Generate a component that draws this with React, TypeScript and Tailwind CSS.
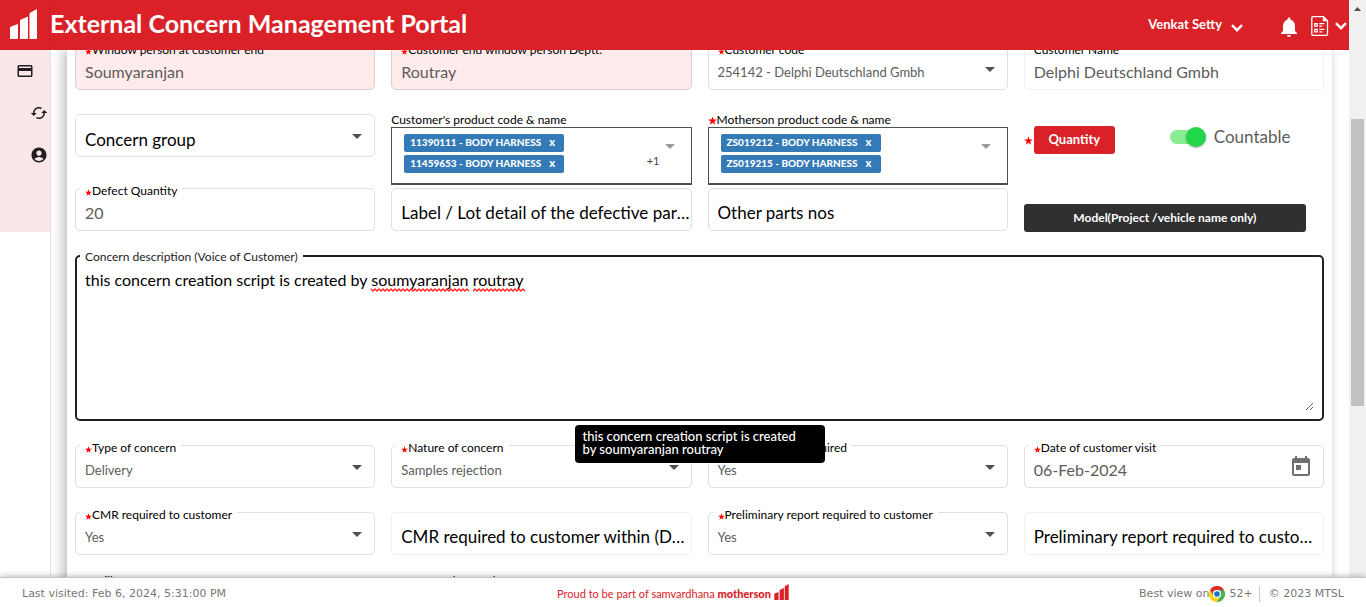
import React, { useId, useState } from "react";
import {
  MdAccountCircle,
  MdCached,
  MdNotifications,
  MdPayment,
  MdToday,
} from "react-icons/md";

function Star({ small = true }: { small?: boolean }) {
  return (
    <svg
      viewBox="0 0 24 24"
      aria-hidden="true"
      className={small ? "mt-[2px] inline-block size-[7px] shrink-0" : "inline-block size-[9px] shrink-0"}
    >
      <path
        fill="#ff0000"
        d="M12 1l3 8.200 8.700.2-7 5.300 2.500 8.300L12 18l-7.200 5 2.500-8.300-7-5.300 8.700-.2z"
      />
    </svg>
  );
}

function BarsLogo({ className }: { className: string }) {
  return (
    <svg viewBox="0 0 27 30" aria-hidden="true" className={className}>
      <path
        fill="currentColor"
        d="M0 19q0-1 1-1.400L8 15v14q0 1-1 1H0zM10 12q0-1 1-1.400L18 7.500V29q0 1-1 1h-7zM19.500 5q0-1 1-1.400L27 0v29q0 1-1 1h-6.500z"
      />
    </svg>
  );
}

function Triangle({ className }: { className: string }) {
  return (
    <svg viewBox="0 0 10 5" aria-hidden="true" className={className}>
      <path d="M0 0h10L5 5z" fill="currentColor" />
    </svg>
  );
}

function Chevron() {
  return (
    <svg viewBox="0 0 12 8" aria-hidden="true" className="h-2 w-3">
      <path d="M1 1.200l5 5 5-5" fill="none" stroke="currentColor" strokeWidth="2.400" />
    </svg>
  );
}

function ReportIcon() {
  return (
    <svg viewBox="0 0 18 20" aria-hidden="true" className="h-5 w-[18px]" fill="none" stroke="currentColor">
      <path d="M2 .7h10.500l4 4V18q0 1.300-1.300 1.300H2Q.8 19.300.8 18V2Q.8.7 2 .7z" strokeWidth="1.300" />
      <path d="M12.300.8v4h4.200z" fill="currentColor" />
      <path d="M3.700 7.600h2.500v2.500H3.700zM3.700 13.300h2.500v2.500H3.700zM8.300 7.700h5M8.300 10.200h3M8.300 13.300h5M8.300 15.800h3" strokeWidth="1.200" />
    </svg>
  );
}

function ChromeIcon() {
  return (
    <svg viewBox="0 0 48 48" aria-hidden="true" className="size-4">
      <path fill="#fcd209" d="M24 24L3.200 12A24 24 0 0 0 24 48l10.400-18z" />
      <path fill="#4caf50" d="M24 48a24 24 0 0 0 20.800-36L24 12l10.400 18z" />
      <path fill="#db2f2b" d="M3.200 12A24 24 0 0 1 44.800 12H24a12 12 0 0 0-11.400 8.300l-1 5z" />
      <circle cx="24" cy="24" r="12" fill="#fff" />
      <circle cx="24" cy="24" r="8.500" fill="#1b73d1" />
    </svg>
  );
}

function NotchLabel({ id, text, required, clear }: { id: string; text: string; required?: boolean; clear?: boolean }) {
  return (
    <label
      htmlFor={id}
      className={
        "absolute -top-[6px] left-1 flex items-center whitespace-nowrap px-[5px] text-xs leading-4 text-black " +
        (clear ? "" : "bg-white")
      }
    >
      {required && <Star />}
      {text}
    </label>
  );
}

type FieldProps = {
  label?: string;
  required?: boolean;
  value?: string;
  placeholder?: string;
  tone?: "normal" | "pink" | "faint";
  icon?: React.ReactNode;
};

const tones = {
  normal: "border-[#dfdfdf]",
  pink: "border-[#e0cdcd] bg-[#ffebeb]",
  faint: "border-[#f0f0f0]",
};

function TextField({ label, required, value, placeholder, tone = "normal", icon }: FieldProps) {
  const id = useId();
  return (
    <div className={"relative flex h-[43px] min-w-0 items-center rounded-[5px] border " + tones[tone]}>
      {label && <NotchLabel id={id} text={label} required={required} clear={tone === "pink"} />}
      <input
        id={id}
        defaultValue={value}
        placeholder={placeholder}
        aria-label={label ? undefined : placeholder}
        className={
          "h-full w-full min-w-0 text-ellipsis bg-transparent pl-[9px] pt-[6px] outline-none placeholder:text-black placeholder:opacity-100 " +
          (placeholder ? "text-[17px] text-black " : "text-base text-[#5c5c5c] ") +
          (tone === "faint" ? "pr-[5px]" : "pr-0")
        }
      />
      {icon}
    </div>
  );
}

function SelectField({ label, required, value, large }: { label?: string; required?: boolean; value: string; large?: boolean }) {
  const id = useId();
  return (
    <div className="relative flex h-[43px] min-w-0 items-center rounded-[5px] border border-[#dfdfdf]">
      {label && <NotchLabel id={id} text={label} required={required} />}
      <select
        id={id}
        aria-label={label ? undefined : value}
        className={
          "h-full w-full appearance-none bg-transparent pl-[9px] pr-8 pt-[8px] outline-none " +
          (large ? "text-[17px] text-black" : "text-[13px] text-[#5c5c5c]")
        }
      >
        <option>{value}</option>
      </select>
      <Triangle className="pointer-events-none absolute right-3 top-[19px] h-[5px] w-[10px] text-[#505050]" />
    </div>
  );
}

function CodePicker({ label, required, codes, more }: { label: string; required?: boolean; codes: string[]; more?: string }) {
  return (
    <div className="flex min-w-0 flex-col">
      <span className="flex items-center text-xs leading-[14px] text-black">
        {required && <Star small={false} />}
        {label}
      </span>
      <div className="flex h-[58px] justify-between border border-b-2 border-[#4f4f4f] pl-3 pr-4 pt-[6px]">
        <ul className="flex flex-col gap-[3px]">
          {codes.map((code) => (
            <li
              key={code}
              className="flex h-[18px] w-[160px] items-center gap-2 rounded-[2px] bg-[#337ab7] pb-[3px] pl-[6px] text-[10px] font-black leading-none text-white"
            >
              {code} - BODY HARNESS
              <button type="button" aria-label={"Remove " + code} className="text-[11px] leading-none">
                x
              </button>
            </li>
          ))}
        </ul>
        <div className="flex flex-col items-end pt-[10px]">
          <Triangle className="h-[5px] w-[10px] text-[#999999]" />
          {more && <span className="mr-[15px] mt-1 text-[11px] leading-4 text-[#444]">{more}</span>}
        </div>
      </div>
    </div>
  );
}

const rowGrid = "grid grid-cols-4 gap-x-4";

export default function App() {
  const [countable, setCountable] = useState(true);
  return (
    <div className="flex h-screen flex-col overflow-hidden bg-white font-['Lato',sans-serif]">
      <div className="flex min-h-0 flex-1">
        <div className="flex min-w-0 flex-1 flex-col">
          <header className="z-10 flex h-[50px] shrink-0 items-center bg-[#da2128] text-white">
            <a
              href="#home"
              aria-label="Home"
              className="flex h-full w-[50px] shrink-0 items-center justify-center border-r border-[#cf1f26] pr-[2px] pb-[3px]"
            >
              <BarsLogo className="h-[30px] w-[27px]" />
            </a>
            <h1 className="flex-1 pb-1 text-[25px] font-bold leading-none">External Concern Management Portal</h1>
            <button type="button" className="flex items-center gap-[9px] text-[13px] font-bold">
              Venkat Setty
              <span className="pt-[5px]">
                <Chevron />
              </span>
            </button>
            <button type="button" aria-label="Notifications" className="ml-[34px]">
              <MdNotifications className="mt-1 size-6" />
            </button>
            <button type="button" aria-label="Reports" className="ml-[10px] mr-[2px] flex items-center gap-[6px] pt-[2px]">
              <ReportIcon />
              <Chevron />
            </button>
          </header>

          <div className="flex min-h-0 flex-1 overflow-hidden">
            <nav className="w-[51px] shrink-0 border-r border-[#e4e4e4]">
              <div className="flex h-[182px] flex-col gap-6 bg-[#fbe7e9] pt-3 text-[#1f1f1f]">
                <a href="#cards" aria-label="Concerns" className="ml-4">
                  <MdPayment className="size-[18px]" />
                </a>
                <a href="#sync" aria-label="Refresh" className="ml-[30px]">
                  <MdCached className="size-[18px]" />
                </a>
                <a href="#account" aria-label="Account" className="ml-[30px]">
                  <MdAccountCircle className="size-[18px]" />
                </a>
              </div>
            </nav>

            <main className="min-w-0 flex-1 overflow-hidden px-4">
              <form className="min-h-full border-r border-[#ececec] px-2 shadow-[-5px_0_10px_rgba(0,0,0,0.22),1px_0_6px_rgba(0,0,0,0.06)]">
                <div className={rowGrid + " -translate-y-[3px]"}>
                  <TextField label="Window person at customer end" required value="Soumyaranjan" tone="pink" />
                  <TextField label="Customer end window person Deptt." required value="Routray" tone="pink" />
                  <SelectField label="Customer code" required value="254142 - Delphi Deutschland Gmbh" />
                  <TextField label="Customer Name" value="Delphi Deutschland Gmbh" tone="faint" />
                </div>

                <div className={rowGrid + " mt-5"}>
                  <div className="pt-px">
                    <SelectField value="Concern group" large />
                  </div>
                  <CodePicker label="Customer's product code & name" codes={["11390111", "11459653"]} more="+1" />
                  <CodePicker label="Motherson product code & name" required codes={["ZS019212", "ZS019215"]} />
                  <div className="flex items-start pt-[13px]">
                    <span className="flex h-7 items-center">
                      <Star small={false} />
                    </span>
                    <button
                      type="button"
                      className="ml-px h-7 w-[81px] rounded-[3px] bg-[#da2128] text-[13px] font-bold text-white"
                    >
                      Quantity
                    </button>
                    <label className="ml-[55px] flex h-[21px] items-center gap-2 text-[17px] text-[#5c5c5c]">
                      <input
                        type="checkbox"
                        role="switch"
                        checked={countable}
                        onChange={() => setCountable(!countable)}
                        className="peer sr-only"
                      />
                      <span className="flex h-[14px] w-9 items-center rounded-full bg-[#b5b5b5] peer-checked:justify-end peer-checked:bg-[#8aec93]">
                        <span className="size-5 shrink-0 rounded-full bg-[#22d64a] shadow-[0_1px_2px_rgba(0,0,0,0.3)]" />
                      </span>
                      Countable
                    </label>
                  </div>
                </div>

                <div className={rowGrid + " mt-[3px]"}>
                  <TextField label="Defect Quantity" required value="20" />
                  <TextField placeholder="Label / Lot detail of the defective part and box" />
                  <TextField placeholder="Other parts nos" />
                  <div className="pt-4">
                    <button
                      type="button"
                      className="h-7 w-[94%] rounded-[3px] bg-[#303030] text-xs font-bold text-white"
                    >
                      Model(Project /vehicle name only)
                    </button>
                  </div>
                </div>

                <div className="relative mt-[23px] h-[166px] rounded-[5px] border-2 border-[#212121]">
                  <label
                    htmlFor="description"
                    className="absolute -top-[10px] left-[3px] bg-white px-[5px] text-xs leading-5 text-[#222]"
                  >
                    Concern description (Voice of Customer)
                  </label>
                  <textarea
                    id="description"
                    spellCheck={false}
                    defaultValue="this concern creation script is created by soumyaranjan routray"
                    className="absolute inset-x-2 bottom-2 top-[13px] resize text-base leading-5 text-black outline-none"
                  />
                  <svg
                    aria-hidden="true"
                    className="pointer-events-none absolute left-[294px] top-[31px] h-1 w-[154px]"
                  >
                    <defs>
                      <pattern id="squiggle" width="4" height="4" patternUnits="userSpaceOnUse">
                        <path d="M-1 0l3 3 3-3" fill="none" stroke="#ff2020" strokeWidth="1.300" />
                      </pattern>
                    </defs>
                    <rect width="98" height="4" fill="url(#squiggle)" />
                    <rect x="102" width="52" height="4" fill="url(#squiggle)" />
                  </svg>
                  <div
                    role="tooltip"
                    className="absolute left-1/2 top-full z-10 mt-[6px] w-[250px] -translate-x-1/2 rounded bg-black pb-[7px] pl-2 pr-4 pt-[5px] text-[13px] font-medium leading-[13px] text-white"
                  >
                    this concern creation script is created by soumyaranjan routray
                  </div>
                </div>

                <div className={rowGrid + " mt-6"}>
                  <SelectField label="Type of concern" required value="Delivery" />
                  <SelectField label="Nature of concern" required value="Samples rejection" />
                  <SelectField label="Customer visit required" required value="Yes" />
                  <TextField
                    label="Date of customer visit"
                    required
                    value="06-Feb-2024"
                    icon={
                      <button type="button" aria-label="Open calendar" className="mr-[10px] pt-px text-[#707070]">
                        <MdToday className="size-6" />
                      </button>
                    }
                  />
                </div>

                <div className={rowGrid + " mt-6"}>
                  <SelectField label="CMR required to customer" required value="Yes" />
                  <TextField placeholder="CMR required to customer within (Days)" tone="faint" />
                  <SelectField label="Preliminary report required to customer" required value="Yes" />
                  <TextField placeholder="Preliminary report required to customer within (Days)" tone="faint" />
                </div>

                <div className={rowGrid + " mt-[23px]"}>
                  <SelectField label="Will" required value="Yes" />
                  <TextField label="Concern detected" value="" />
                </div>
              </form>
            </main>
          </div>
        </div>

        <div aria-hidden="true" className="flex w-[17px] shrink-0 flex-col items-center bg-[#f1f1f1]">
          <svg viewBox="0 0 7 4" className="mt-[7px] h-1 w-[7px]">
            <path d="M0 4h7L3.500 0z" fill="#505050" />
          </svg>
          <div className="mt-[108px] h-[287px] w-[13px] bg-[#c1c1c1]" />
        </div>
      </div>

      <footer className="z-20 grid h-[30px] shrink-0 grid-cols-3 items-center border-t border-[#c4c4c4] bg-white px-[22px] pt-[3px] font-['DejaVu_Sans',sans-serif] text-[11px] text-[#777] shadow-[0_-1px_6px_rgba(0,0,0,0.25)]">
        <span>Last visited: Feb 6, 2024, 5:31:00 PM</span>
        <span className="flex items-center justify-center pr-5 font-['Lato',sans-serif] text-[#da2128]">
          Proud to be part of samvardhana&nbsp;<b className="font-black">motherson</b>
          <BarsLogo className="mb-[5px] ml-[3px] h-4 w-[15px]" />
        </span>
        <span className="flex items-center justify-end">
          Best view on
          <ChromeIcon />
          <span className="ml-1 mr-[6px]">52+</span>
          <span className="flex h-4 items-center border-l border-[#ccc] pl-[9px]">© 2023 MTSL</span>
        </span>
      </footer>
    </div>
  );
}
